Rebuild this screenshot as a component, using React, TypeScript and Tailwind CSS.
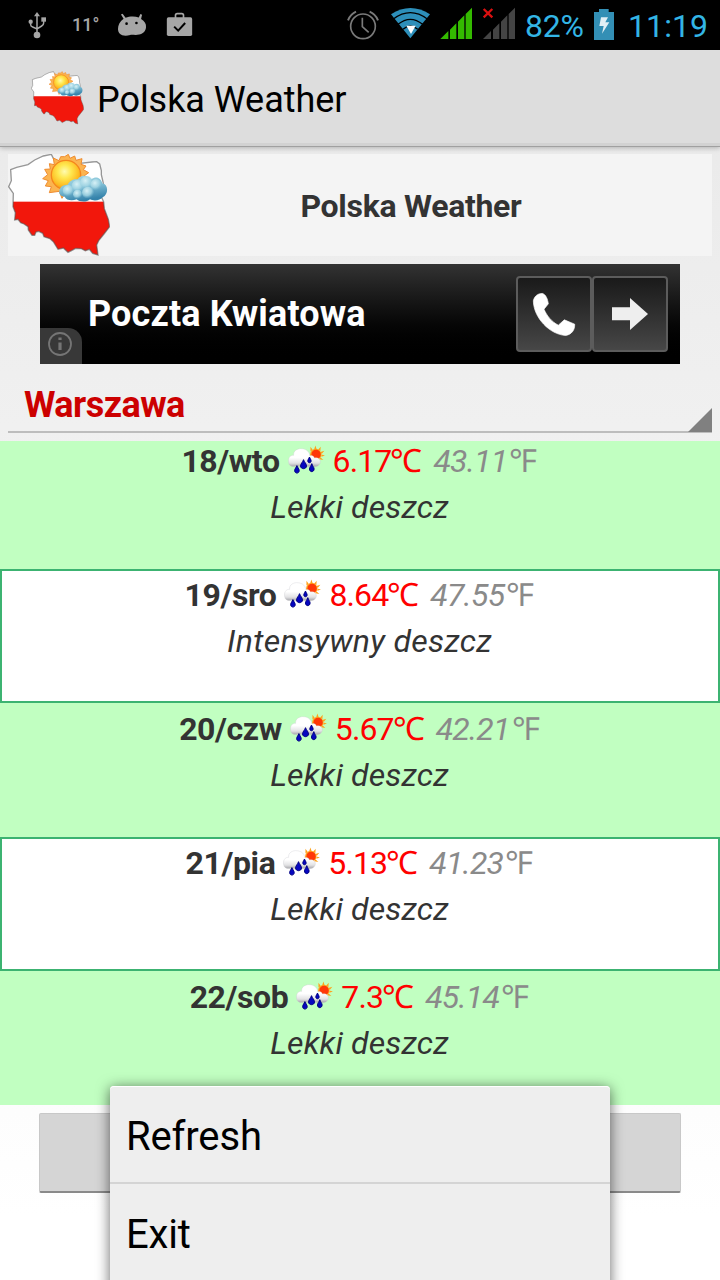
import React from "react";

type Day = { date: string; c: string; f: string; text: string; track: string };

const days: Day[] = [
  { date: "18/wto", c: "6.17", f: "43.11", text: "Lekki deszcz", track: "tracking-[0.15px]" },
  { date: "19/sro", c: "8.64", f: "47.55", text: "Intensywny deszcz", track: "tracking-[0.3px]" },
  { date: "20/czw", c: "5.67", f: "42.21", text: "Lekki deszcz", track: "tracking-[0.15px]" },
  { date: "21/pia", c: "5.13", f: "41.23", text: "Lekki deszcz", track: "tracking-[0.15px]" },
  { date: "22/sob", c: "7.3", f: "45.14", text: "Lekki deszcz", track: "tracking-[0.15px]" },
];

function PolandLogo({ id, className }: { id: string; className: string }) {
  const outline =
    "M32 89 L50 82 L84 74 L104 60 L130 48 L154 43 L160 55 L168 66 L240 70 L276 66 L290 65 L299 72 L304 92 L304 104 L310 130 L311 150 L304 170 L311 186 L313 206 L319 222 L325 238 L329 260 L312 282 L296 302 L290 315 L294 345 L278 340 L268 328 L256 332 L244 326 L227 325 L216 331 L204 337 L190 324 L174 328 L160 305 L150 296 L132 290 L128 280 L116 274 L108 276 L104 286 L96 286 L85 270 L84 260 L72 252 L62 248 L54 238 L44 240 L46 218 L39 200 L40 160 L26 140 L34 122 Z";
  return (
    <svg viewBox="24 42 306 306" className={className}>
      <defs>
        <clipPath id={id + "clip"}><path d={outline} /></clipPath>
        <radialGradient id={id + "sun"} cx="0.45" cy="0.38" r="0.65">
          <stop offset="0" stopColor="#fffbb0" />
          <stop offset="0.35" stopColor="#ffe850" />
          <stop offset="0.75" stopColor="#fdbb22" />
          <stop offset="1" stopColor="#f08a10" />
        </radialGradient>
        <linearGradient id={id + "cloud"} x1="0" y1="0" x2="0.3" y2="1">
          <stop offset="0" stopColor="#a5d7e4" />
          <stop offset="0.5" stopColor="#84c2d8" />
          <stop offset="1" stopColor="#3583ab" />
        </linearGradient>
        <radialGradient id={id + "puff"} cx="0.4" cy="0.35" r="0.65">
          <stop offset="0" stopColor="#d8f1f6" />
          <stop offset="0.6" stopColor="#a9d9e6" stopOpacity="0.8" />
          <stop offset="1" stopColor="#84c2d8" stopOpacity="0" />
        </radialGradient>
      </defs>
      <g clipPath={"url(#" + id + "clip)"}>
        <rect x="20" y="40" width="320" height="146" fill="#fff" />
        <rect x="20" y="185" width="320" height="170" fill="#f2170c" />
      </g>
      <path d={outline} fill="none" stroke="#555" strokeOpacity="0.6" strokeWidth="4" />
      <path
        d="M194 50 L205 43 L210 55 L224 48 L228 61 L246 56 L243 73 L258 78 L250 89 L266 98 L252 108 L260 122 L244 128 L240 145 L224 146 L212 158 L200 150 L186 175 L178 154 L148 158 L154 140 L136 138 L145 122 L128 116 L143 104 L134 88 L151 87 L148 71 L163 74 L160 54 L177 62 L182 50 Z"
        fill="#fbb450"
        stroke="#ef8c30"
        strokeWidth="3"
      />
      <circle cx="198" cy="105" r="44" fill={"url(#" + id + "sun)"} stroke="#f5851c" strokeWidth="4" />
      <path
        d="M178 152 C180 140 190 134 203 134 C208 122 222 116 233 118 C240 104 264 104 274 118 C288 106 304 114 307 130 C326 134 326 164 308 172 C302 182 280 184 270 178 C260 188 238 186 230 178 C214 184 198 180 194 170 C182 168 176 162 178 152 Z"
        fill={"url(#" + id + "cloud)"}
      />
      <circle cx="234" cy="138" r="19" fill={"url(#" + id + "puff)"} />
      <circle cx="260" cy="128" r="20" fill={"url(#" + id + "puff)"} />
      <circle cx="288" cy="134" r="17" fill={"url(#" + id + "puff)"} />
      <circle cx="205" cy="152" r="17" fill={"url(#" + id + "puff)"} />
      <circle cx="233" cy="163" r="14" fill={"url(#" + id + "puff)"} />
      <circle cx="264" cy="158" r="18" fill={"url(#" + id + "puff)"} />
    </svg>
  );
}

function RainIcon({ id }: { id: string }) {
  return (
    <svg viewBox="355 15 112 90" className="-mt-[2px] ml-[8px] mr-[8px] h-[30px] w-[37px] shrink-0">
      <defs>
        <linearGradient id={id} x1="0" y1="0" x2="0" y2="1">
          <stop offset="0.5" stopColor="#ffffff" />
          <stop offset="0.8" stopColor="#e2e2e4" />
          <stop offset="1" stopColor="#a4a4a8" />
        </linearGradient>
      </defs>
      <g fill="#ffa21c">
        <path d="M434 28 L438 16 L442 28 Z M446 29 L454 20 L453 33 Z M453 36 L465 32 L457 42 Z M456 43 L467 46 L456 50 Z M453 52 L462 60 L450 58 Z M430 30 L423 20 L423 34 Z M444 60 L447 68 L450 58 Z" />
        <circle cx="439" cy="43" r="17" />
      </g>
      <circle cx="440" cy="43" r="14" fill="#ff3808" />
      <path
        d="M357 68 C354 54 362 45 372 46 C370 32 384 24 398 26 C412 27 421 37 421 48 C426 44 434 48 435 54 C447 50 456 60 452 70 C449 79 440 81 430 80 L374 80 C364 80 358 76 357 68 Z"
        fill={"url(#" + id + ")"}
        stroke="#c9c9cd"
        strokeWidth="1"
      />
      <g fill="#0606c0" stroke="#000080" strokeWidth="3">
        <path d="M402 59 C404 66 411 71 411 78 C411 89 393 89 393 78 C393 71 400 66 402 59 Z" />
        <path d="M420 51 C422 56 425 59 425 63 C425 70 415 70 415 63 C415 59 418 56 420 51 Z" />
        <path d="M382 77 C384 83 389 87 389 92 C389 102 375 102 375 92 C375 87 380 83 382 77 Z" />
        <path d="M427 71 C429 78 434 82 434 87 C434 98 420 98 420 87 C420 82 425 78 427 71 Z" />
      </g>
    </svg>
  );
}

function StatusBar() {
  return (
    <div className="flex h-[50px] shrink-0 items-start bg-black">
      <svg viewBox="80 0 60 150" className="ml-[27px] h-[50px] w-[20px] shrink-0">
        <g fill="none" stroke="#a6a6a6" strokeWidth="4.5">
          <path d="M110 104 V44 M91 66 V74 Q91 79 97 81 L110 87 L124 78 Q130 75 130 69 V60" />
        </g>
        <circle cx="110" cy="105" r="10" fill="#a6a6a6" />
        <path d="M110 36 L119 49 H101 Z" fill="#a6a6a6" />
        <circle cx="91" cy="65" r="6.5" fill="#a6a6a6" />
        <rect x="123" y="52" width="14" height="13" fill="#a6a6a6" />
      </svg>
      <span className="ml-[25px] mt-[12px] w-[26px] whitespace-nowrap text-[18px] font-medium leading-[26px] text-[#a6a6a6]">11°</span>
      <svg viewBox="350 0 94 150" className="ml-[19px] h-[50px] w-[31px] shrink-0">
        <path
          d="M353 87 C353 75 358 65 370 56 L362 43 L367 41 L376 53 C388 48 405 48 416 52 L421 42 L426 44 L423 57 C434 63 439 72 438 82 C437 94 428 103 417 104 C407 107 398 104 390 105 C381 108 373 108 366 106 C358 103 353 97 353 87 Z"
          fill="#a6a6a6"
        />
        <circle cx="379" cy="71" r="4" fill="#000" />
        <circle cx="409" cy="69" r="4" fill="#000" />
      </svg>
      <svg viewBox="500 0 80 150" className="ml-[18px] h-[50px] w-[27px] shrink-0">
        <path d="M528 54 V46 Q528 41 533 41 H547 Q552 41 552 46 V54" fill="none" stroke="#a6a6a6" strokeWidth="5" />
        <rect x="502" y="52" width="76" height="56" rx="5" fill="#a6a6a6" />
        <path d="M524 80 L536 92 L557 69" fill="none" stroke="#000" strokeWidth="6" />
      </svg>
      <svg viewBox="48 0 102 150" className="ml-[153px] h-[50px] w-[34px] shrink-0">
        <g fill="none" stroke="#7a7a7a" strokeWidth="5">
          <circle cx="99" cy="79" r="37" />
          <path d="M97 53 V80 L116 97" />
          <path d="M54 61 Q61 43 78 35 M119 35 Q137 43 144 61" strokeWidth="6" />
        </g>
      </svg>
      <svg viewBox="180 0 123 150" className="ml-[10px] h-[50px] w-[41px] shrink-0">
        <path d="M183 43 Q241 5 300 43 L241 115 Z" fill="#2d8fba" />
        <g fill="none" stroke="#000" strokeWidth="4">
          <path d="M190 57 Q241 19 292 57" />
          <path d="M204 73 Q241 43 278 73" />
          <path d="M219 88 Q241 68 263 88" />
        </g>
        <path d="M229 77 H257 L243 102 Z" fill="#fff" />
      </svg>
      <svg viewBox="330 0 99 150" className="ml-[9px] h-[50px] w-[33px] shrink-0">
        <path d="M331 117 L355 93 V117 Z M360 89 L379 70 V117 H360 Z M384 65 L403 46 V117 H384 Z M407 42 L426 23 V117 H407 Z" fill="#34ba00" />
      </svg>
      <svg viewBox="456 0 102 150" className="ml-[9px] h-[50px] w-[34px] shrink-0">
        <path d="M459 117 L483 93 V117 Z M489 89 L508 70 V117 H489 Z M513 65 L532 46 V117 H513 Z M536 42 L555 23 V117 H536 Z" fill="#444" />
        <path d="M461 27 L487 52 M487 27 L461 52" stroke="#da1010" strokeWidth="7" />
      </svg>
      <span className="ml-[9px] mt-[6px] w-[59px] whitespace-nowrap text-[32px] leading-[40px] tracking-[-0.2px] text-[#33b5e5]">82%</span>
      <svg viewBox="219 0 66 150" className="ml-[9px] h-[50px] w-[22px] shrink-0">
        <path d="M222 36 H237 V27 H266 V36 H282 V120 H222 Z" fill="#338fb5" />
        <path d="M243 52 H264 L256 67 H268 L246 101 L251 78 H238 Z" fill="#e2eff5" />
      </svg>
      <span className="ml-[13px] mt-[6px] whitespace-nowrap text-[32px] leading-[40px] tracking-[0.1px] text-[#33b5e5]">11:19</span>
    </div>
  );
}

function DayRow({ day, index }: { day: Day; index: number }) {
  const box = index % 2 === 1 ? "h-[134px] border-2 border-[#3cb371] bg-white pt-[2px]" : index === 0 ? "h-[128px] bg-[#c1ffc1] pt-0" : "h-[134px] bg-[#c1ffc1] pt-[4px]";
  return (
    <div className={"shrink-0 text-[32px] text-[#333] " + box}>
      <div className={"flex h-[44px] items-center justify-center whitespace-nowrap pr-[2px] " + (index === 0 ? "-mt-[2px]" : "")}>
        <b className="font-bold tracking-[-0.4px]">{day.date}</b>
        <RainIcon id={"rain" + index} />
        <span className="tracking-[-0.9px] text-[#f00]">{day.c}<span className="-ml-[1px]">℃</span></span>
        <i className="ml-[12px] tracking-[-0.8px] text-[#8a8a8a]">{day.f}<span className="ml-[2px] not-italic">℉</span></i>
      </div>
      <div className={"h-[46px] pr-[1px] text-center italic leading-[48px] " + day.track}>{day.text}</div>
    </div>
  );
}

export default function App() {
  return (
    <div className="relative flex h-[1280px] w-[720px] flex-col overflow-hidden bg-linear-to-b from-[#e8e8e8] to-white to-95% font-['Roboto','Open_Sans',sans-serif]">
      <StatusBar />
      <header className="z-10 flex h-[97px] shrink-0 items-center border-b border-[#a0a0a0] bg-[#ddd] shadow-[0_1px_5px_rgba(0,0,0,0.25),inset_0_-3px_0_#d2d2d2]">
        <PolandLogo id="s" className="ml-[31px] h-[54px] w-[53px]" />
        <h1 className="ml-[13px] mt-1 text-[36px] leading-[48px] tracking-[-0.05px] text-black">Polska Weather</h1>
      </header>
      <div className="mx-2 mt-[7px] flex h-[102px] shrink-0 items-center bg-[#f4f4f4]">
        <PolandLogo id="l" className="h-[102px] w-[102px]" />
        <div className="mt-[2px] flex-1 text-center text-[32px] font-bold leading-[40px] tracking-[-0.3px] text-[#333]">Polska Weather</div>
      </div>
      <div className="relative mx-10 mt-2 flex h-[100px] shrink-0 items-center bg-linear-to-b from-[#333] to-black">
        <div className="ml-[48px] flex-1 text-[36px] font-bold tracking-[0.15px] text-white">Poczta Kwiatowa</div>
        <div className="flex h-[76px] w-[76px] items-center justify-center rounded-[4px] border-2 border-[#5c5c5c] bg-linear-to-b from-[#1a1a1a] to-[#474747]">
          <svg viewBox="96 92 132 134" className="h-[45px] w-[44px]">
            <path d="M100 118 C103 104 114 95 128 96 C138 100 143 113 145 127 L132 143 C140 162 155 181 175 191 L193 175 L224 188 C225 205 215 219 197 222 C149 219 101 169 100 118 Z" fill="#fff" stroke="#fff" strokeWidth="2" strokeLinejoin="round" />
          </svg>
        </div>
        <div className="mr-3 flex h-[76px] w-[76px] items-center justify-center rounded-[4px] border-2 border-[#5c5c5c] bg-linear-to-b from-[#1a1a1a] to-[#474747]">
          <svg viewBox="336 116 108 96" className="h-[32px] w-[36px]">
            <path d="M336 144 H390 V116 L444 164 L390 212 V183 H336 Z" fill="#eee" />
          </svg>
        </div>
        <div className="absolute bottom-0 left-0 flex h-9 w-[42px] items-center justify-center rounded-tr-[14px] bg-[#383838]">
          <svg viewBox="0 0 24 24" className="-mt-1 -ml-[2px] h-6 w-6">
            <circle cx="12" cy="12" r="11" fill="none" stroke="#757575" strokeWidth="1.8" />
            <path d="M12 5.5 V8 M12 10.5 V18" stroke="#757575" strokeWidth="3.2" />
          </svg>
        </div>
      </div>
      <div className="mx-2 mb-2 flex h-[69px] shrink-0 items-end border-b-2 border-[#bdbdbd]">
        <div className="mb-[4px] ml-4 flex-1 text-[36px] font-bold leading-[44px] tracking-[-0.55px] text-[#c00]">Warszawa</div>
        <svg viewBox="0 0 24 24" className="-mb-[1px] h-6 w-6"><path d="M24 0 V24 H0 Z" fill="#808080" /></svg>
      </div>
      {days.map((d, i) => <DayRow key={d.date} day={d} index={i} />)}
      <div className="mx-[39px] mt-[8px] h-[80px] shrink-0 rounded-[2px] border border-[#c8c8c8] border-b-2 border-b-[#8a8a8a] bg-[#d5d5d5]" />
      <div className="absolute left-[110px] top-[1086px] z-20 h-[210px] w-[500px] rounded-[4px] bg-[#eee] text-[40px] leading-[48px] tracking-[-0.15px] text-black shadow-[0_2px_14px_rgba(0,0,0,0.6),inset_0_1px_0_#fff]">
        <div className="h-[98px] border-b-2 border-[#d4d4d4] pl-4 pt-[27px]">Refresh</div>
        <div className="h-[98px] pl-4 pt-[27px]">Exit</div>
      </div>
    </div>
  );
}
